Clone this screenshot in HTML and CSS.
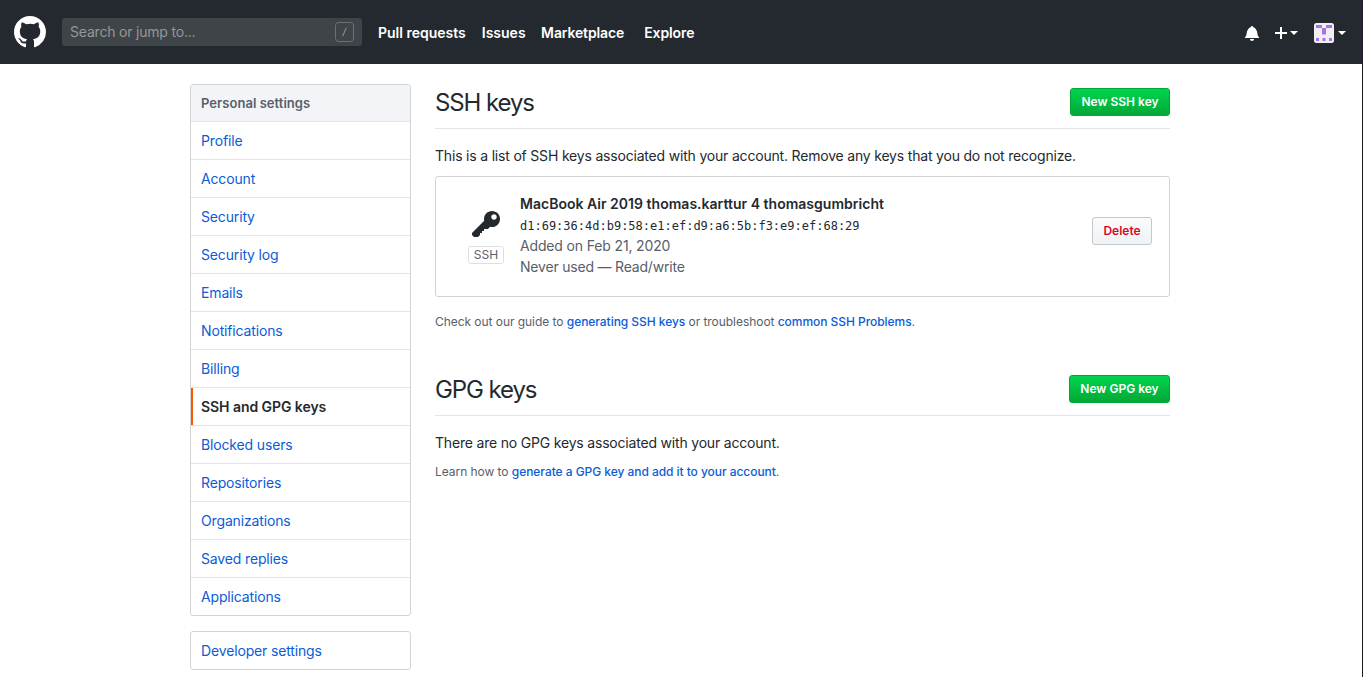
FILE: index.html
```html
<!DOCTYPE html>
<html lang="en">
<head>
<meta charset="utf-8">
<title>SSH and GPG keys</title>
<link rel="stylesheet" href="styles.css">
</head>
<body>
<header class="header">
  <svg class="logo" width="32" height="32" viewBox="0 0 16 16"><path fill="#fff" fill-rule="evenodd" d="M8 0C3.58 0 0 3.58 0 8c0 3.54 2.29 6.53 5.47 7.59.4.07.55-.17.55-.38 0-.19-.01-.82-.01-1.49-2.01.37-2.53-.49-2.69-.94-.09-.23-.48-.94-.82-1.13-.28-.15-.68-.52-.01-.53.63-.01 1.08.58 1.23.82.72 1.21 1.87.87 2.33.66.07-.52.28-.87.51-1.07-1.78-.2-3.64-.89-3.64-3.95 0-.87.31-1.59.82-2.15-.08-.2-.36-1.02.08-2.12 0 0 .67-.21 2.2.82.64-.18 1.32-.27 2-.27.68 0 1.36.09 2 .27 1.53-1.04 2.2-.82 2.2-.82.44 1.1.16 1.92.08 2.12.51.56.82 1.27.82 2.15 0 3.07-1.87 3.75-3.65 3.95.29.25.54.73.54 1.48 0 1.07-.01 1.93-.01 2.2 0 .21.15.46.55.38A8.013 8.013 0 0016 8c0-4.42-3.58-8-8-8z"/></svg>
  <div class="search">
    <span class="search-text">Search or jump to...</span>
    <svg class="slash" width="19" height="20" viewBox="0 0 19 20" fill="none"><rect x=".5" y=".5" width="18" height="19" rx="3" stroke="#6e7274"/><path d="M11.3 5.8 7.7 14.2" stroke="#979a9c"/></svg>
  </div>
  <nav class="nav">
    <a class="nav-pulls">Pull requests</a>
    <a class="nav-issues">Issues</a>
    <a class="nav-market">Marketplace</a>
    <a class="nav-explore">Explore</a>
  </nav>
  <div class="tools">
    <svg class="bell" width="14" height="16" viewBox="0 0 14 16"><path fill="#fff" fill-rule="evenodd" d="M14 12v1H0v-1l.73-.58c.77-.77.81-2.55 1.19-4.42C2.69 3.23 6 2 6 2c0-.55.45-1 1-1s1 .45 1 1c0 0 3.39 1.23 4.16 5 .38 1.88.42 3.66 1.19 4.42l.66.58H14zm-7 4c1.11 0 2-.89 2-2H5c0 1.11.89 2 2 2z"/></svg>
    <svg class="plus" width="12" height="16" viewBox="0 0 12 16"><path fill="#fff" d="M12 9H7v5H5V9H0V7h5V2h2v5h5v2z"/></svg>
    <span class="caret"></span>
    <svg class="avatar" width="20" height="20" viewBox="0 0 20 20"><rect width="20" height="20" rx="2.5" fill="#f0f0f0"/><path fill="#a970e8" d="M2 2h6v3H2zM12 2h6v3h-6zM8 5h4v6.500H8zM2 15h3v3H2zM8.500 15h3v3h-3zM15 15h3v3h-3z"/></svg>
    <span class="caret"></span>
  </div>
</header>
<main class="page">
  <aside class="sidebar">
    <nav class="menu">
      <h3 class="menu-heading">Personal settings</h3>
      <a class="menu-item">Profile</a>
      <a class="menu-item">Account</a>
      <a class="menu-item">Security</a>
      <a class="menu-item">Security log</a>
      <a class="menu-item">Emails</a>
      <a class="menu-item">Notifications</a>
      <a class="menu-item">Billing</a>
      <a class="menu-item selected">SSH and GPG keys</a>
      <a class="menu-item">Blocked users</a>
      <a class="menu-item">Repositories</a>
      <a class="menu-item">Organizations</a>
      <a class="menu-item">Saved replies</a>
      <a class="menu-item">Applications</a>
    </nav>
    <nav class="menu">
      <a class="menu-item">Developer settings</a>
    </nav>
  </aside>
  <div class="content">
    <section class="section">
      <div class="subhead"><h2>SSH keys</h2><a class="btn primary ssh-btn">New SSH key</a></div>
      <p class="lead">This is a list of SSH keys associated with your account. Remove any keys that you do not recognize.</p>
      <div class="key-box">
        <div class="key-type">
          <svg width="28" height="32" viewBox="0 0 14 16"><path fill="#24292e" fill-rule="evenodd" d="M12.83 2.17C12.08 1.42 11.14 1.03 10 1c-1.13.03-2.08.42-2.83 1.17S6.04 3.86 6.01 5c0 .3.03.59.09.89L0 12v1l1 1h2l1-1v-1h1v-1h1v-1h2l1.090-1.110c.3.08.59.11.91.11 1.140-.03 2.080-.42 2.830-1.170S13.970 6.140 14 5c-.03-1.140-.42-2.080-1.170-2.830zM11 5.380c-.77 0-1.380-.61-1.380-1.380 0-.77.61-1.380 1.380-1.380.77 0 1.380.61 1.380 1.380 0 .77-.61 1.380-1.380 1.380z"/></svg>
          <span class="tag">SSH</span>
        </div>
        <div class="key-info">
          <strong>MacBook Air 2019 thomas.karttur 4 thomasgumbricht</strong>
          <code>d1:69:36:4d:b9:58:e1:ef:d9:a6:5b:f3:e9:ef:68:29</code>
          <span class="added">Added on Feb 21, 2020</span>
          <span class="used">Never used — Read/write</span>
        </div>
        <a class="btn danger">Delete</a>
      </div>
      <p class="help">Check out our guide to <a>generating SSH keys</a> or troubleshoot <a>common SSH Problems</a>.</p>
    </section>
    <section class="section">
      <div class="subhead"><h2>GPG keys</h2><a class="btn primary gpg-btn">New GPG key</a></div>
      <p class="lead">There are no GPG keys associated with your account.</p>
      <p class="help help-gpg">Learn how to <a>generate a GPG key and add it to your account</a>.</p>
    </section>
  </div>
</main>
</body>
</html>
```
FILE: styles.css
```css
* { box-sizing: border-box; }
body {
  margin: 0;
  height: 677px;
  overflow: hidden;
  border-right: 1px solid #1b1a22;
  background: #fff;
  color: #24292e;
  font: 14px/21px Inter, "Liberation Sans", sans-serif;
}
h2, h3, p { margin: 0; }
a { white-space: nowrap; }

.header {
  display: flex;
  align-items: center;
  height: 64px;
  padding: 0 16px 0 14px;
  background: #24292f;
}
.logo { flex: none; }
.search {
  display: flex;
  align-items: center;
  justify-content: space-between;
  width: 300px;
  height: 28px;
  margin: 0 16px;
  padding: 0 8px;
  border-radius: 3px;
  background: #3f4448;
  color: #94979a;
}
.search-text { padding-bottom: 2px; letter-spacing: -.2px; }
.nav { display: flex; flex: 1; padding-top: 1px; color: #fff; font-weight: 600; }
.nav a { margin-right: 16px; }
.nav .nav-market { margin-right: 20px; letter-spacing: -.13px; }
.nav .nav-issues { margin-right: 15.5px; }
.nav .nav-explore { letter-spacing: -.1px; }
.tools { display: flex; align-items: center; padding-top: 2px; }
.bell { margin-right: 16px; }
.plus { margin-right: 3px; }
.caret {
  border: 4px solid transparent;
  border-top-color: #fff;
  border-bottom: 0;
}
.avatar { margin: 0 4px 0 16px; }

.page { display: flex; gap: 24px; width: 980px; margin: 20px 0 0 190px; }
.sidebar { width: 221px; }
.menu {
  margin-bottom: 15px;
  border: 1px solid #d1d5da;
  border-radius: 3px;
  overflow: hidden;
}
.menu-heading {
  height: 37px;
  padding: 8px 10px;
  border-bottom: 1px solid #e1e4e8;
  background: #f3f4f8;
  color: #586069;
  font-size: 13px;
  font-weight: 600;
  line-height: 20px;
  letter-spacing: .04px;
}
.menu-item {
  display: block;
  height: 38px;
  padding: 8px 10px;
  border-bottom: 1px solid #e1e4e8;
  color: #0b5cd7;
  letter-spacing: -.15px;
}
.menu-item:last-child { height: 37px; border-bottom: 0; }
.selected {
  box-shadow: inset 2px 0 #f65a05;
  color: #24292e;
  font-weight: 600;
  letter-spacing: -.06px;
}

.content { width: 735px; }
.subhead {
  display: flex;
  justify-content: space-between;
  align-items: flex-start;
  height: 45px;
  padding-top: 4px;
  border-bottom: 1px solid #e1e4e8;
}
h2 { font-size: 24px; font-weight: 400; line-height: 30px; letter-spacing: -1.1px; }
.btn {
  height: 28px;
  padding: 3px 0;
  border: 1px solid #c5c9cc;
  border-radius: 3px;
  font-size: 12px;
  font-weight: 600;
  line-height: 20px;
  text-align: center;
}
.primary {
  border-color: #07a537;
  background: linear-gradient(#00d54c, #02a838);
  color: #fff;
}
.ssh-btn { width: 100px; }
.gpg-btn { width: 101px; }
.danger { width: 60px; margin-top: 24px; background: linear-gradient(#fafbfc, #eff3f6); color: #d70a28; }
.lead { margin-top: 16px; letter-spacing: -.19px; }
.key-box {
  display: flex;
  align-items: flex-start;
  height: 121px;
  margin-top: 10px;
  padding: 16px 17px 0 32px;
  border: 1px solid #d1d5da;
  border-radius: 3px;
}
.key-type {
  display: flex;
  flex-direction: column;
  align-items: center;
  width: 36px;
  margin: 16px 16px 0 0;
}
.tag {
  width: 36px;
  height: 18px;
  margin-top: 5px;
  border: 1px solid #dcdfe2;
  border-radius: 3px;
  color: #586069;
  font-size: 12px;
  line-height: 16px;
  text-align: center;
}
.key-info { display: flex; flex: 1; flex-direction: column; align-items: flex-start; color: #586069; white-space: nowrap; }
strong { color: #24292e; font-weight: 600; letter-spacing: .02px; }
code { height: 21px; color: #24292e; font: 12px/25px "DejaVu Sans Mono", monospace; }
.added { letter-spacing: -.15px; }
.used { letter-spacing: -.2px; }
.help { margin-top: 15px; color: #586069; font-size: 12px; line-height: 20px; letter-spacing: -.05px; white-space: nowrap; }
.help a { color: #0b5cd7; font-weight: 500; }
.section + .section { margin-top: 39px; }
.help-gpg { margin-top: 9px; }
```
